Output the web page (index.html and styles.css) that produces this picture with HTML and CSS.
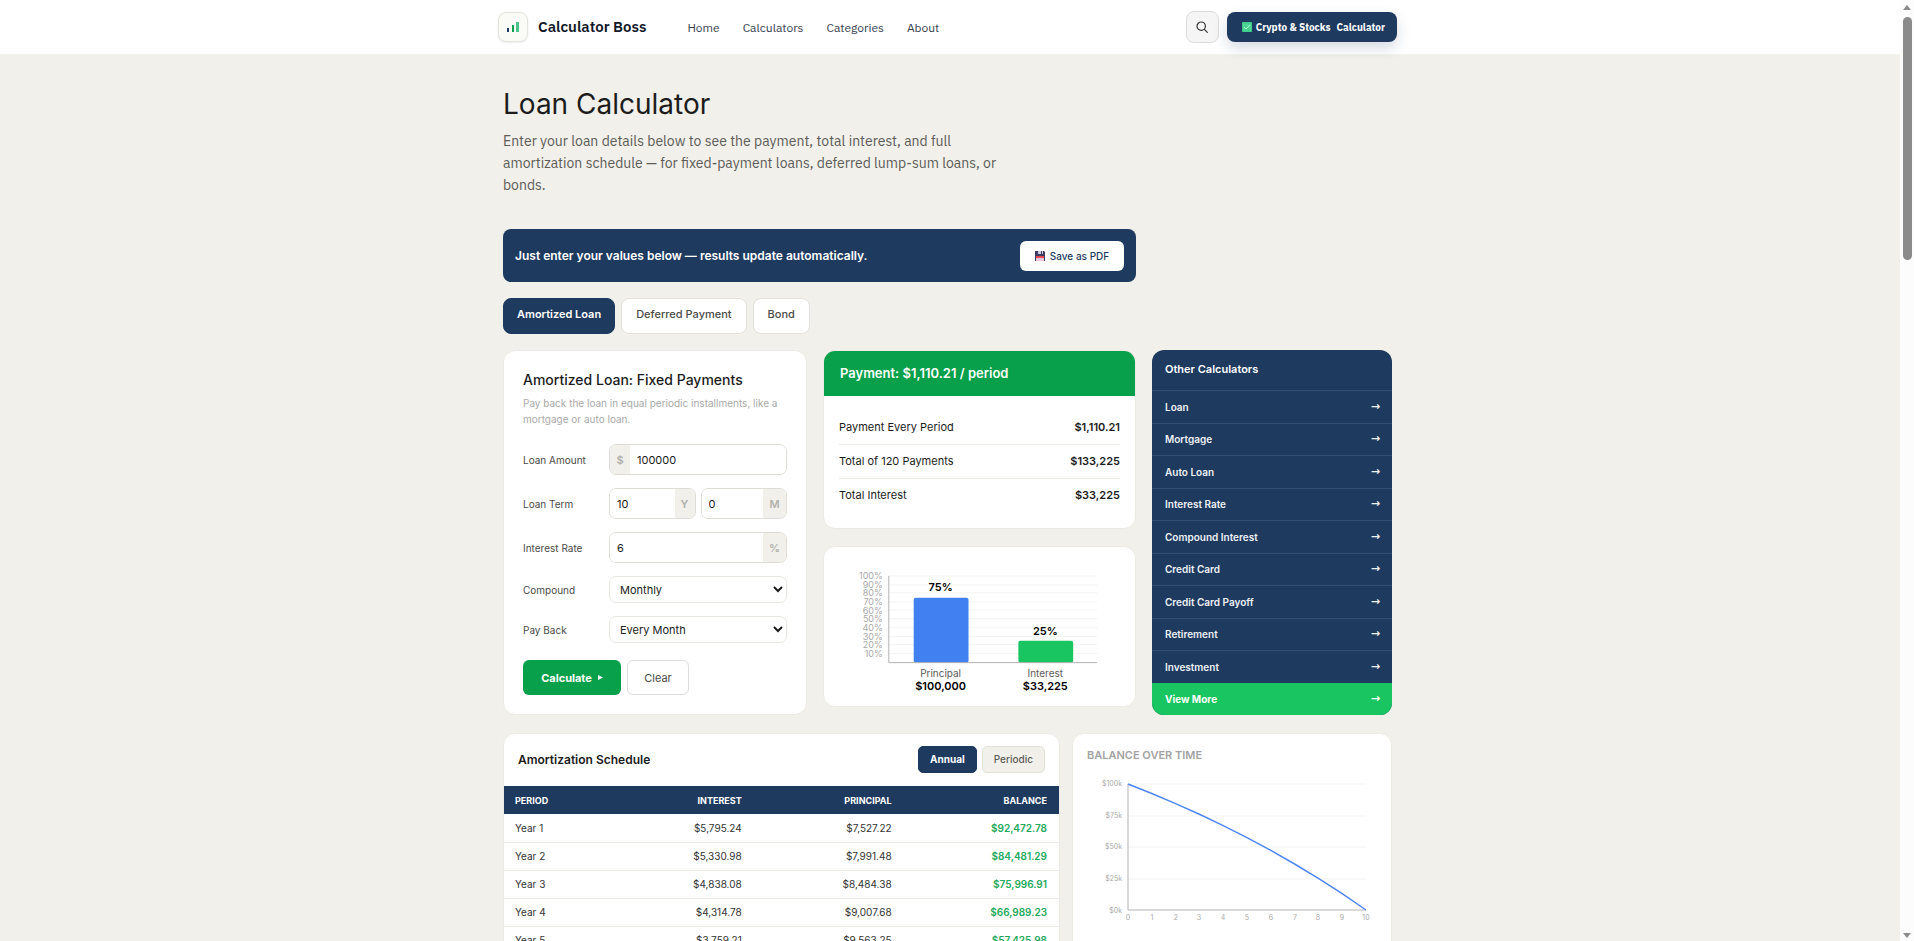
FILE: index.html
```
<!DOCTYPE html>
<html lang="en">

<head>
    <meta charset="utf-8">
    <meta name="viewport" content="width=device-width, initial-scale=1.0">
    <title>Loan Calculator - Calculator Boss</title>
    <link rel="stylesheet" href="styles.css">
</head>

<body>

    <header class="topbar">
        <div class="topbar-inner">
            <a class="brand" href="#">
                <span class="brand-icon">
                    <svg width="12" height="12" viewBox="0 0 12 12">
                        <rect x="0" y="7" width="2" height="4" fill="#1e3a5f" />
                        <rect x="5" y="4" width="2" height="7" fill="#08a04b" />
                        <rect x="9" y="1" width="3" height="10" fill="#4cc38a" />
                    </svg>
                </span>
                Calculator Boss
            </a>
            <nav class="nav">
                <a href="#">Home</a>
                <a href="#">Calculators</a>
                <a href="#">Categories</a>
                <a href="#">About</a>
            </nav>
            <button class="search" aria-label="Search">
                <svg width="12" height="12" viewBox="0 0 12 12" fill="none" stroke="#333" stroke-width="1.2" stroke-linecap="round">
                    <circle cx="5.2" cy="5.2" r="4.2" />
                    <path d="M8.4 8.4 L11.3 11.3" />
                </svg>
            </button>
            <a class="crypto" href="#">
                <svg width="10" height="10" viewBox="0 0 10 10">
                    <rect width="10" height="10" rx="1" fill="#3fcf8a" />
                    <path d="M2 1v8M5 1v8M8 1v8M1 3h8M1 6h8" stroke="#6fdcaa" stroke-width=".5" />
                    <path d="M2 5 L4 7 L8 3" fill="none" stroke="#c9f7e0" stroke-width=".8" />
                </svg>
                <span>Crypto &amp; Stocks</span>
                <span class="crypto-last">Calculator</span>
            </a>
        </div>
    </header>

    <main class="page">
        <h1>Loan Calculator</h1>
        <p class="intro">Enter your loan details below to see the payment, total interest, and full amortization schedule — for fixed-payment loans, deferred lump-sum loans, or bonds.</p>

        <div class="banner">
            <span>Just enter your values below — results update automatically.</span>
            <button class="save">
                <svg width="10" height="10" viewBox="0 0 10 10">
                    <path d="M0 0h9l1 1v9H0z" fill="#3d3a66" />
                    <rect x="3" y="0" width="5" height="3" fill="#c9cbe0" />
                    <rect x="6" y="0" width="1" height="3" fill="#3d3a66" />
                    <rect x="1" y="5" width="8" height="2" fill="#e5484d" />
                    <rect x="1" y="7" width="8" height="3" fill="#e8c9dc" />
                </svg>
                Save as PDF
            </button>
        </div>

        <div class="tabs">
            <button class="tab active">Amortized Loan</button>
            <button class="tab">Deferred Payment</button>
            <button class="tab">Bond</button>
        </div>

        <div class="tool">
            <form class="card form">
                <h2>Amortized Loan: Fixed Payments</h2>
                <p class="hint">Pay back the loan in equal periodic installments, like a mortgage or auto loan.</p>
                <div class="row">
                    <label for="amount">Loan Amount</label>
                    <div class="field"><span class="unit left">$</span><input id="amount" type="text" value="100000"></div>
                </div>
                <div class="row">
                    <label for="years">Loan Term</label>
                    <div class="field"><input id="years" type="text" value="10"><span class="unit narrow">Y</span></div>
                    <div class="field"><input type="text" value="0" aria-label="Months"><span class="unit">M</span></div>
                </div>
                <div class="row">
                    <label for="rate">Interest Rate</label>
                    <div class="field"><input id="rate" type="text" value="6"><span class="unit">%</span></div>
                </div>
                <div class="row">
                    <label for="compound">Compound</label>
                    <select id="compound">
                        <option>Monthly</option>
                        <option>Annually</option>
                    </select>
                </div>
                <div class="row">
                    <label for="payback">Pay Back</label>
                    <select id="payback">
                        <option>Every Month</option>
                        <option>Every Year</option>
                    </select>
                </div>
                <div class="actions">
                    <button type="button" class="calc">Calculate
                        <svg width="5" height="5" viewBox="0 0 5 5"><path d="M0 0 L5 2.5 L0 5z" fill="#fff" /></svg>
                    </button>
                    <button type="reset" class="clear">Clear</button>
                </div>
            </form>

            <div class="results">
                <section class="card summary">
                    <h2>Payment: $1,110.21 / period</h2>
                    <dl>
                        <div><dt>Payment Every Period</dt><dd>$1,110.21</dd></div>
                        <div><dt>Total of 120 Payments</dt><dd>$133,225</dd></div>
                        <div><dt>Total Interest</dt><dd>$33,225</dd></div>
                    </dl>
                </section>
                <section class="card">
                    <svg class="bars" viewBox="0 0 312 160">
                        <path class="grid" d="M64 29h210M64 38h210M64 46h210M64 55h210M64 63h210M64 72h210M64 81h210M64 90h210M64 98h210M64 107h210" />
                        <g class="ticks">
                            <text x="59" y="32">100%</text>
                            <text x="59" y="41">90%</text>
                            <text x="59" y="49">80%</text>
                            <text x="59" y="58">70%</text>
                            <text x="59" y="67">60%</text>
                            <text x="59" y="75">50%</text>
                            <text x="59" y="84">40%</text>
                            <text x="59" y="93">30%</text>
                            <text x="59" y="101">20%</text>
                            <text x="59" y="110">10%</text>
                        </g>
                        <rect x="90" y="51" width="55" height="65" rx="2" fill="#4080f0" />
                        <rect x="195" y="94" width="55" height="22" rx="2" fill="#18c561" />
                        <path class="axis" d="M65 29v87h209" />
                        <g class="values">
                            <text x="117" y="44">75%</text>
                            <text x="222" y="88">25%</text>
                            <text x="117" y="143">$100,000</text>
                            <text x="222" y="143">$33,225</text>
                        </g>
                        <g class="names">
                            <text x="117" y="130">Principal</text>
                            <text x="222" y="130">Interest</text>
                        </g>
                    </svg>
                </section>
            </div>

            <aside class="others">
                <h2>Other Calculators</h2>
                <a href="#">Loan <span>→</span></a>
                <a href="#">Mortgage <span>→</span></a>
                <a href="#">Auto Loan <span>→</span></a>
                <a href="#">Interest Rate <span>→</span></a>
                <a href="#">Compound Interest <span>→</span></a>
                <a href="#">Credit Card <span>→</span></a>
                <a href="#">Credit Card Payoff <span>→</span></a>
                <a href="#">Retirement <span>→</span></a>
                <a href="#">Investment <span>→</span></a>
                <a class="more" href="#">View More <span>→</span></a>
            </aside>
        </div>

        <div class="details">
            <section class="card schedule">
                <div class="schedule-head">
                    <h2>Amortization Schedule</h2>
                    <button class="active">Annual</button>
                    <button>Periodic</button>
                </div>
                <table>
                    <thead>
                        <tr><th>PERIOD</th><th>INTEREST</th><th>PRINCIPAL</th><th>BALANCE</th></tr>
                    </thead>
                    <tbody>
                        <tr><td>Year 1</td><td>$5,795.24</td><td>$7,527.22</td><td>$92,472.78</td></tr>
                        <tr><td>Year 2</td><td>$5,330.98</td><td>$7,991.48</td><td>$84,481.29</td></tr>
                        <tr><td>Year 3</td><td>$4,838.08</td><td>$8,484.38</td><td>$75,996.91</td></tr>
                        <tr><td>Year 4</td><td>$4,314.78</td><td>$9,007.68</td><td>$66,989.23</td></tr>
                        <tr><td>Year 5</td><td>$3,759.21</td><td>$9,563.25</td><td>$57,425.98</td></tr>
                    </tbody>
                </table>
            </section>
            <section class="card balance">
                <h2>BALANCE OVER TIME</h2>
                <svg viewBox="0 0 290 160">
                    <path class="grid" d="M41 20h238M41 52h238M41 83h238M41 115h238" />
                    <path class="axis" d="M41 20v126h238" />
                    <path class="curve" d="M41 20 L64.8 29.5 L88.6 39.6 L112.4 50.2 L136.2 61.6 L160 73.6 L183.8 86.4 L207.6 100 L231.4 114.4 L255.2 129.7 L279 146" />
                    <g class="ticks">
                        <text x="35" y="22">$100k</text>
                        <text x="35" y="54">$75k</text>
                        <text x="35" y="85">$50k</text>
                        <text x="35" y="117">$25k</text>
                        <text x="35" y="149">$0k</text>
                    </g>
                    <g class="years">
                        <text x="41" y="156">0</text>
                        <text x="65" y="156">1</text>
                        <text x="89" y="156">2</text>
                        <text x="112" y="156">3</text>
                        <text x="136" y="156">4</text>
                        <text x="160" y="156">5</text>
                        <text x="184" y="156">6</text>
                        <text x="208" y="156">7</text>
                        <text x="231" y="156">8</text>
                        <text x="255" y="156">9</text>
                        <text x="279" y="156">10</text>
                    </g>
                </svg>
            </section>
        </div>
    </main>

    <div class="scroll" aria-hidden="true">
        <svg width="8" height="5" viewBox="0 0 8 5"><path d="M4 0 L8 5H0z" fill="#8b8b8b" /></svg>
        <div class="thumb"></div>
        <svg width="8" height="5" viewBox="0 0 8 5"><path d="M0 0h8L4 5z" fill="#8b8b8b" /></svg>
    </div>

</body>

</html>
```

FILE: styles.css
```
* {
    box-sizing: border-box;
}

body {
    margin: 0;
    height: 100vh;
    overflow: hidden;
    padding-right: 14px;
    background: #f1f0ea;
    color: #1c1c1c;
    font-family: Inter, "Liberation Sans", sans-serif;
    font-size: 11px;
}

h1,
h2,
p,
dl,
dd {
    margin: 0;
}

a {
    text-decoration: none;
    color: inherit;
}

button,
input,
select {
    font-family: inherit;
    font-size: 11px;
    color: inherit;
}

button {
    display: flex;
    align-items: center;
    justify-content: center;
    border: 0;
    padding: 0;
    border-radius: 6px;
}

/* header */
.topbar {
    border-bottom: 1px solid #f4f3f0;
    background: #fff;
    padding-right: 4px;
    font-family: "IBM Plex Sans", "Noto Sans", sans-serif;
}

.topbar-inner {
    display: flex;
    align-items: center;
    max-width: 900px;
    height: 54px;
    margin: 0 auto;
    padding-right: 1px;
}

.brand {
    display: flex;
    align-items: center;
    gap: 10px;
    color: #111827;
    font-size: 15px;
    line-height: 20px;
    font-weight: 600;
}

.brand-icon {
    display: flex;
    align-items: center;
    justify-content: center;
    width: 30px;
    height: 30px;
    border: 1px solid #e4e4de;
    border-radius: 8px;
    background: #fafaf7;
    box-shadow: 0 1px 2px rgba(0, 0, 0, .08);
}

.nav {
    display: flex;
    flex: 1;
    gap: 23px;
    margin-left: 41px;
    color: #374151;
    font-size: 12px;
    font-weight: 400;
}

.search {
    width: 33px;
    height: 32px;
    margin-right: 8px;
    border: 1px solid #dcdcdc;
    border-radius: 8px;
    background: #f5f5f5;
}

.crypto {
    display: flex;
    align-items: center;
    gap: 4px;
    height: 30px;
    padding: 0 12px 0 15px;
    border-radius: 8px;
    background: #1e3a5f;
    box-shadow: 0 6px 14px rgba(30, 58, 95, .18);
    color: #fff;
    font-size: 10px;
    font-weight: 700;
}

.crypto-last {
    margin-left: 2px;
}

/* page */
.page {
    max-width: 894px;
    margin: 0 auto;
    padding: 32px 5px 0 0;
}

h1 {
    font-size: 28px;
    line-height: 34px;
    font-weight: 400;
}

.intro {
    max-width: 510px;
    margin-top: 9px;
    color: #5c5c58;
    font-family: "IBM Plex Sans", "Noto Sans", sans-serif;
    font-size: 14px;
    line-height: 22px;
}

.banner {
    display: flex;
    align-items: center;
    justify-content: space-between;
    max-width: 633px;
    height: 53px;
    margin-top: 33px;
    padding: 0 12px;
    border-radius: 8px;
    background: #1e3a5f;
    color: #fff;
    font-size: 12px;
    font-weight: 600;
}

.save {
    gap: 5px;
    width: 104px;
    height: 30px;
    background: #fff;
    color: #1e3a5f;
    font-size: 10px;
    font-weight: 500;
}

.tabs {
    display: flex;
    gap: 6px;
    margin: 16px 0;
}

.tab {
    height: 36px;
    padding: 0 14px 4px;
    border: 1px solid #e2e1da;
    border-radius: 8px;
    background: #fff;
    color: #4b4b48;
    font-weight: 500;
}

.tab.active {
    padding: 0 13px 4px;
    border-color: #1e3a5f;
    background: #1e3a5f;
    color: #fff;
    font-weight: 600;
}

.card {
    border: 1px solid #eceae4;
    border-radius: 12px;
    background: #fff;
    overflow: hidden;
}

.tool {
    display: grid;
    grid-template-columns: 304fr 313fr 240fr;
    gap: 16px;
}

/* form */
.form {
    padding: 20px 19px 19px;
}

.form h2 {
    font-size: 14px;
    line-height: 18px;
    font-weight: 500;
}

.hint {
    margin: 6px 0 17px;
    color: #a9a9a9;
    font-size: 10px;
    line-height: 16px;
}

.row {
    display: flex;
    align-items: center;
    gap: 5px;
    margin-bottom: 13px;
}

.row label {
    width: 81px;
    flex-shrink: 0;
    color: #4b4b48;
    font-size: 10px;
}

.field {
    display: flex;
    flex: 1;
    height: 31px;
    border: 1px solid #dddcd5;
    border-radius: 7px;
    overflow: hidden;
}

.field input {
    flex: 1;
    min-width: 0;
    border: 0;
    padding: 0 7px;
}

.unit {
    display: flex;
    align-items: center;
    justify-content: center;
    width: 23px;
    background: #f1f0ea;
    color: #b0b0aa;
    font-size: 11px;
    font-weight: 600;
}

.unit.left,
.unit.narrow {
    width: 20px;
}

.row select {
    flex: 1;
    height: 27px;
    padding: 0 6px;
    border: 1px solid #e8e7e1;
    border-radius: 7px;
    background: #fff;
}

.actions {
    display: flex;
    gap: 6px;
    margin-top: 17px;
}

.actions button {
    height: 35px;
}

.actions .calc {
    gap: 6px;
    width: 98px;
    background: #08a04b;
    color: #fff;
    font-weight: 700;
}

.actions .clear {
    width: 62px;
    border: 1px solid #dddddd;
    background: #fff;
    color: #4b4b48;
}

/* results */
.results {
    display: flex;
    flex-direction: column;
    gap: 17px;
}

.summary h2 {
    padding: 0 16px;
    background: #08a04b;
    color: #fff;
    font-size: 13px;
    line-height: 45px;
    font-weight: 600;
}

.summary dl {
    padding: 15px 15px 16px;
}

.summary dl div {
    display: flex;
    justify-content: space-between;
    line-height: 33px;
    border-bottom: 1px solid #ecebe6;
}

.summary dl div:last-child {
    border-bottom: 0;
}

.summary dd {
    font-weight: 600;
}

.card svg {
    display: block;
    width: 100%;
}

.card .actions svg {
    width: 5px;
}

.grid {
    stroke: #f3f3f1;
}

.axis {
    fill: none;
    stroke: #b3b3b3;
}

.ticks {
    fill: #a9a9a9;
    font-size: 9px;
    text-anchor: end;
}

.values {
    font-size: 11px;
    font-weight: 600;
    text-anchor: middle;
}

.names {
    fill: #5c5c58;
    font-size: 10px;
    text-anchor: middle;
}

/* other calculators */
.others {
    display: flex;
    flex-direction: column;
    border-radius: 12px;
    background: #1e3a5f;
    color: #fff;
    overflow: hidden;
}

.others h2 {
    height: 40px;
    padding: 0 13px;
    font-size: 11px;
    line-height: 38px;
    font-weight: 600;
}

.others a {
    display: flex;
    flex: 1;
    align-items: center;
    justify-content: space-between;
    padding: 0 12px 0 13px;
    border-top: 1px solid #354e6f;
    color: #eef1f5;
    font-size: 10px;
    font-weight: 600;
}

.others span {
    font-family: "DejaVu Sans", sans-serif;
    font-size: 11px;
    line-height: 12px;
}

.others .more {
    border-color: #18c561;
    background: #18c561;
    color: #fff;
    font-weight: 700;
}

/* schedule and balance */
.details {
    display: grid;
    grid-template-columns: 557fr 320fr;
    gap: 12px;
    margin-top: 18px;
}

.schedule-head {
    display: flex;
    align-items: center;
    gap: 5px;
    height: 52px;
    padding: 0 14px 2px;
}

.schedule-head h2 {
    flex: 1;
    font-size: 12px;
    font-weight: 600;
}

.schedule-head button {
    height: 27px;
    padding: 0 11px;
    border: 1px solid #e2e1da;
    border-radius: 5px;
    background: #f1f0ea;
    color: #5c5c58;
    font-size: 10px;
    font-weight: 500;
}

.schedule-head .active {
    border-color: #1e3a5f;
    background: #1e3a5f;
    color: #fff;
    font-weight: 700;
}

table {
    width: 100%;
    border-collapse: collapse;
    table-layout: fixed;
    font-size: 10px;
}

th,
td {
    height: 28px;
    padding: 0 12px;
    text-align: right;
}

th {
    width: 27%;
    background: #1e3a5f;
    color: #fff;
    font-size: 9px;
    font-weight: 700;
}

th:first-child {
    width: 22%;
}

th:nth-child(2) {
    width: 23%;
}

th:last-child {
    width: 28%;
}

th:first-child,
td:first-child {
    padding-left: 11px;
    text-align: left;
}

td {
    border-bottom: 1px solid #ecebe6;
    color: #333;
}

td:last-child {
    color: #22a95b;
    font-weight: 600;
}

.schedule {
    padding-bottom: 28px;
}

.balance {
    padding: 14px;
}

.balance h2 {
    margin-bottom: 2px;
    color: #a3a3a3;
    font-size: 11px;
    line-height: 14px;
    font-weight: 600;
}

.balance .ticks,
.years {
    fill: #a9a9a9;
    font-size: 7px;
}

.years {
    text-anchor: middle;
}

.curve {
    fill: none;
    stroke: #4f86f5;
    stroke-width: 1.5;
}

/* scroll rail at the window edge */
.scroll {
    position: fixed;
    top: 0;
    right: 0;
    bottom: 0;
    display: flex;
    flex-direction: column;
    align-items: center;
    width: 14px;
    padding: 5px 0 3px;
    background: #fcfcfc;
}

.thumb {
    width: 9px;
    height: 26%;
    margin: 7px 0 auto;
    border-radius: 5px;
    background: #8b8b8b;
}
```
